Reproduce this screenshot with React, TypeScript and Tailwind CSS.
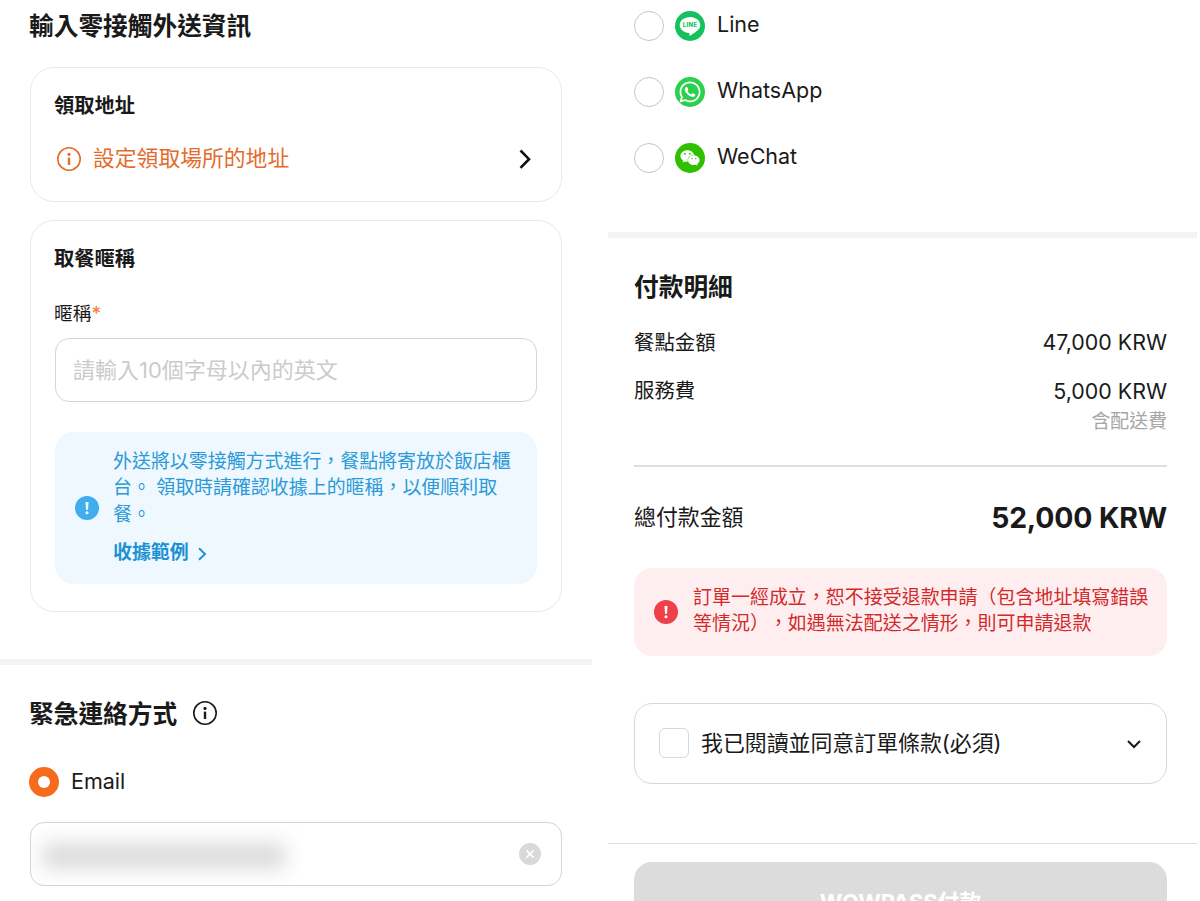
import type { ReactNode } from "react";
import { FaWhatsapp, FaWeixin } from "react-icons/fa";

function InfoIcon({ className }: { className: string }) {
  return (
    <svg viewBox="0 0 24 24" className={className} fill="none" stroke="currentColor">
      <circle cx="12" cy="12" r="11.2" strokeWidth="1.6" />
      <circle cx="12" cy="7.4" r="1.6" fill="currentColor" stroke="none" />
      <path d="M12 10.6V18" strokeWidth="2.4" />
    </svg>
  );
}

function AlertIcon({ className }: { className: string }) {
  return (
    <svg viewBox="0 0 24 24" className={className}>
      <circle cx="12" cy="12" r="12" fill="currentColor" />
      <path d="M10.5 6h3l-.5 7.8h-2z" fill="#fff" />
      <circle cx="12" cy="16.7" r="1.5" fill="#fff" />
    </svg>
  );
}

function LineLogo() {
  return (
    <svg viewBox="0 0 30 30" className="size-[30px] shrink-0">
      <circle cx="15" cy="15" r="15" fill="#15c15d" />
      <path
        d="M15 5.9c5.7 0 10.3 3.600 10.3 8.100 0 2.200-1.200 4-2.900 5.600-2 2-5 3.700-7.300 5.100-.5.300-.8 0-.7-.5.100-.8.500-2-.4-2.200-5.100-.5-9.300-3.600-9.300-8C4.700 9.500 9.300 5.900 15 5.900z"
        fill="#fff"
      />
      <text
        x="15"
        y="16.3"
        textAnchor="middle"
        fontSize="6"
        fontWeight="800"
        textLength="14.4"
        className="font-['Inter',sans-serif]"
        fill="#15c15d"
      >
        LINE
      </text>
    </svg>
  );
}

function Messenger({ logo, name }: { logo: ReactNode; name: string }) {
  return (
    <label className="flex h-[66px] items-center">
      <span className="size-[30px] shrink-0 rounded-full border-[1.5px] border-[#c6c6c6]" />
      <span className="ml-[11px] flex">{logo}</span>
      <span className="mb-[3px] ml-3 text-[21.5px] leading-none">{name}</span>
    </label>
  );
}

function DeliveryColumn() {
  return (
    <section className="flex w-[592px] shrink-0 flex-col">
      <div className="flex flex-col px-[30px]">
        <h2 className="-ml-px flex h-[67px] items-center pb-[15px] text-[24.7px] leading-none font-bold">
          輸入零接觸外送資訊
        </h2>

        <div className="flex h-[135px] flex-col rounded-[24px] border-[1.5px] border-[#e9e9e9] px-6">
          <h3 className="mt-[23px] -ml-px flex h-[30px] items-center text-[20.3px] leading-none font-bold">領取地址</h3>
          <div className="mt-[22px] flex h-[32px] items-center">
            <InfoIcon className="ml-[2px] size-6 text-[#e56b2c]" />
            <span className="ml-3 text-[21.8px] leading-none text-[#e56b2c]">設定領取場所的地址</span>
            <svg viewBox="0 0 24 24" className="mr-0 ml-auto size-6" fill="none" stroke="#111" strokeWidth="2.6">
              <path d="M7.500 3.500l8.500 8.700-8.500 8.700" />
            </svg>
          </div>
        </div>

        <div className="mt-[18px] flex h-[392px] flex-col rounded-[24px] border-[1.5px] border-[#e9e9e9] px-6">
          <h3 className="mt-[23px] -ml-px flex h-[30px] items-center text-[20.3px] leading-none font-bold">取餐暱稱</h3>
          <div className="mt-[26px] -ml-px flex h-[28px] items-center text-[18.7px] leading-none">
            暱稱<span className="font-medium text-[#f5803e]">*</span>
          </div>
          <div className="mt-[10px] flex h-[64px] items-center rounded-[14px] border-[1.5px] border-[#d4d4d4] pl-[17px] text-[22px] leading-none text-[#cbcbcb]">
            請輸入10個字母以內的英文
          </div>
          <div className="mt-[30px] flex h-[152px] items-center rounded-[18px] bg-[#eff8ff] pl-5 text-[#2b9ad6]">
            <AlertIcon className="size-6 shrink-0 text-[#3fadf0]" />
            <div className="ml-[14px] flex flex-col">
              <p className="text-[18.95px] leading-[26.3px] whitespace-nowrap">
                外送將以零接觸方式進行，餐點將寄放於飯店櫃
                <br />
                台。 領取時請確認收據上的暱稱，以便順利取
                <br />
                餐。
              </p>
              <div className="mt-3 flex h-[27px] items-center text-[18.9px] leading-none font-bold text-[#1b92d4]">
                收據範例
                <svg viewBox="0 0 12 16" className="mt-[2px] ml-[7px] h-4 w-3" fill="none" stroke="currentColor" strokeWidth="1.9">
                  <path d="M3 2.200l6 5.800-6 5.800" />
                </svg>
              </div>
            </div>
          </div>
        </div>
      </div>

      <div className="mt-[47px] h-[6px] shrink-0 bg-[#f3f3f3]" />

      <div className="flex flex-col px-[30px]">
        <h2 className="mt-[29px] -ml-px flex h-10 items-center text-[24.7px] leading-none font-bold">
          緊急連絡方式
          <InfoIcon className="mb-[3px] ml-4 size-6" />
        </h2>
        <label className="mt-[28px] flex h-[40px] items-center">
          <span className="-ml-px flex size-[30px] items-center justify-center rounded-full bg-[#f76b1c]">
            <span className="size-3 rounded-full bg-white" />
          </span>
          <span className="mb-[1px] ml-3 text-[21.5px] leading-none">Email</span>
        </label>
        <div className="mt-[20px] flex h-[64px] items-center justify-between overflow-hidden rounded-[14px] border-[1.5px] border-[#d4d4d4] pr-5">
          <span className="mt-1 ml-[12px] h-[26px] w-[242px] bg-[#dadada] blur-[10px]" />
          <svg viewBox="0 0 22 22" className="size-[22px]">
            <circle cx="11" cy="11" r="11" fill="#d9d9d9" />
            <path d="M7.400 7.400l7.200 7.200M14.600 7.400l-7.200 7.200" stroke="#fff" strokeWidth="1.7" />
          </svg>
        </div>
      </div>
    </section>
  );
}

function PaymentColumn() {
  return (
    <section className="ml-4 flex w-[589px] shrink-0 flex-col">
      <div className="-mt-[7px] flex shrink-0 flex-col pl-[26px]">
        <Messenger logo={<LineLogo />} name="Line" />
        <Messenger
          logo={
            <span className="flex size-[30px] items-center justify-center rounded-full bg-[#2bd04d]">
              <FaWhatsapp className="size-[24px] text-white" />
            </span>
          }
          name="WhatsApp"
        />
        <Messenger
          logo={
            <span className="flex size-[30px] items-center justify-center rounded-full bg-[#2dc100]">
              <FaWeixin className="size-[20px] text-white" />
            </span>
          }
          name="WeChat"
        />
      </div>

      <div className="mt-[41px] h-[6px] shrink-0 bg-[#f3f3f3]" />

      <div className="flex shrink-0 flex-col pr-[30px] pl-[26px]">
        <h2 className="mt-[29px] flex h-10 items-center text-[24.7px] leading-none font-bold">付款明細</h2>
        <div className="mt-[19px] flex h-8 items-center justify-between leading-none">
          <span className="mt-[3px] text-[20.4px]">餐點金額</span>
          <span className="mt-[2px] text-[21.4px]">47,000 KRW</span>
        </div>
        <div className="mt-4 flex h-8 items-center justify-between leading-none">
          <span className="mt-[2px] text-[20.4px]">服務費</span>
          <span className="mt-[3px] text-[21.4px]">5,000 KRW</span>
        </div>
        <div className="flex h-8 items-center justify-end pt-px text-[18.9px] leading-none text-[#a6a6a6]">含配送費</div>
        <div className="mt-[27px] h-[1.5px] bg-[#dedede]" />
        <div className="mt-[30px] flex h-10 items-center justify-between leading-none">
          <span className="mt-[2px] text-[21.9px]">總付款金額</span>
          <span className="mt-[3px] text-[28.4px] font-bold tracking-[-0.15px]">52,000 KRW</span>
        </div>
        <div className="mt-[31px] flex h-[88px] items-center rounded-[18px] bg-[#feeeef] pl-5 text-[#d2292b]">
          <AlertIcon className="size-6 shrink-0 text-[#ee4048]" />
          <p className="mb-[1px] ml-[15px] text-[18.98px] leading-[26.3px] whitespace-nowrap [text-spacing-trim:space-all]">
            訂單一經成立，恕不接受退款申請（包含地址填寫錯誤
            <br />
            等情況），如遇無法配送之情形，則可申請退款
          </p>
        </div>
        <div className="mt-[47px] flex h-[81px] items-center rounded-[18px] border-[1.5px] border-[#d8d8d8] pr-[23px] pl-6">
          <span className="size-[30px] rounded-[6px] border-[1.5px] border-[#d8d8d8]" />
          <span className="mt-[1px] ml-3 text-[21.9px] leading-none">我已閱讀並同意訂單條款(必須)</span>
          <svg viewBox="0 0 18 18" className="mt-px ml-auto size-[18px]" fill="none" stroke="#1a1a1a" strokeWidth="2">
            <path d="M3 6l6 6 6-6" />
          </svg>
        </div>
      </div>

      <div className="mt-[59px] h-[1.5px] shrink-0 bg-[#dedede]" />
      <div className="px-[26px] pr-[30px]">
        <button className="mt-[18px] flex h-[81px] w-full items-center justify-center rounded-[18px] bg-[#dcdcdc] text-[21.8px] leading-none font-bold text-white">
          WOWPASS付款
        </button>
      </div>
    </section>
  );
}

export default function App() {
  return (
    <main className="flex h-[901px] w-[1200px] overflow-hidden bg-white font-['Inter','Noto_Sans_CJK_TC',sans-serif] text-[#1a1a1a]">
      <DeliveryColumn />
      <PaymentColumn />
    </main>
  );
}
